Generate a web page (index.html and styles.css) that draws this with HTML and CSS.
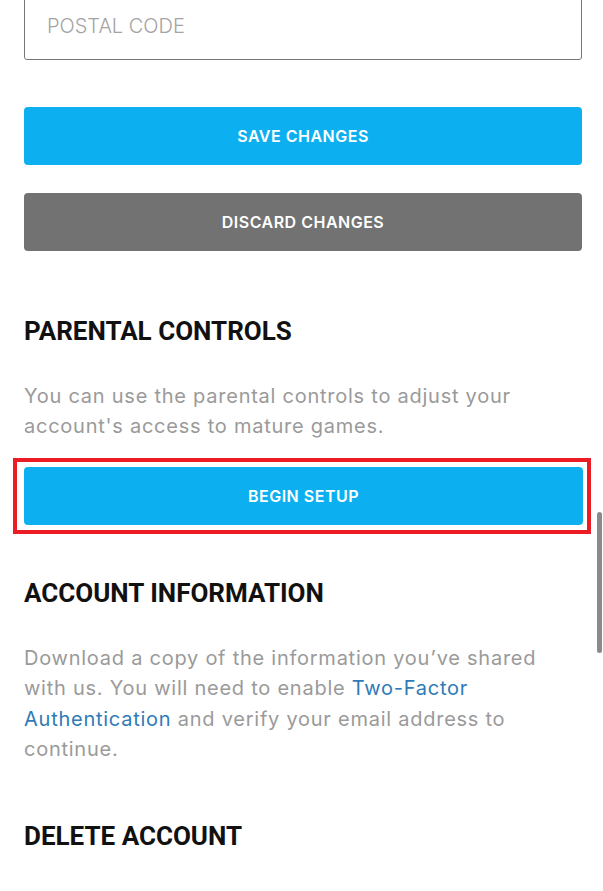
FILE: index.html
```html
<!DOCTYPE html>
<html lang="en">
<head>
<meta charset="utf-8">
<title>Account Settings</title>
<link rel="stylesheet" href="styles.css">
</head>
<body>
<main class="page">
  <div class="field">
    <input class="field-input" type="text" placeholder="POSTAL CODE">
  </div>
  <div class="actions">
    <button class="btn btn-primary" type="button">SAVE CHANGES</button>
    <button class="btn btn-secondary" type="button">DISCARD CHANGES</button>
  </div>

  <section class="section section-first">
    <h2 class="section-title">PARENTAL CONTROLS</h2>
    <p class="section-text">You can use the parental controls to adjust your account's access to mature games.</p>
    <div class="highlight">
      <button class="btn btn-primary" type="button">BEGIN SETUP</button>
    </div>
  </section>

  <section class="section section-account">
    <h2 class="section-title">ACCOUNT INFORMATION</h2>
    <p class="section-text">Download a copy of the information you’ve shared with us. You will need to enable <a class="link" href="#">Two-Factor Authentication</a> and verify your email address to continue.</p>
  </section>

  <section class="section section-delete">
    <h2 class="section-title">DELETE ACCOUNT</h2>
    <p class="section-text section-text-tight">Request to permanently delete your account.</p>
  </section>
</main>
<div class="scrollbar"></div>
</body>
</html>
```
FILE: styles.css
```css
* { box-sizing: border-box; }

html, body {
  margin: 0;
  padding: 0;
  background: #ffffff;
  height: 100%;
  overflow: hidden;
}

body {
  font-family: "Inter", "Noto Sans", sans-serif;
  color: #111;
}

.page {
  padding: 0 21px 0 24px;
  margin-top: -8px;
}

.field-input {
  display: block;
  width: 100%;
  height: 68px;
  border: 1.5px solid #777;
  border-radius: 3px;
  background: #fff;
  padding: 0 22px;
  font-family: "Inter", sans-serif;
  font-weight: 300;
  font-size: 20px;
  color: #333;
  outline: none;
}

.field-input::placeholder {
  color: #a3a3a3;
}

.actions {
  margin-top: 47px;
  display: flex;
  flex-direction: column;
  gap: 28px;
}

.btn {
  display: block;
  width: 100%;
  height: 58px;
  border: 0;
  border-radius: 4px;
  font-family: "Inter", sans-serif;
  font-weight: 600;
  font-size: 16px;
  letter-spacing: 0.5px;
  color: #fff;
  cursor: pointer;
}

.btn-primary { background: #0cb0f0; }
.btn-secondary { background: #727272; }

.section-title {
  margin: 0;
  font-family: "Roboto", "Inter", sans-serif;
  font-weight: 700;
  font-size: 26px;
  line-height: 28px;
  color: #111;
}

.section-first { margin-top: 66px; }
.section-account { margin-top: 45px; }
.section-delete { margin-top: 57px; }

.section-text {
  max-width: 550px;
  margin: 35.5px 0 0;
  font-size: 20px;
  line-height: 30.5px;
  letter-spacing: 0.75px;
  color: #9a9a9a;
}

.section-text-tight { margin-top: 34px; }

.link {
  color: #2f7bb7;
  text-decoration: none;
}

.highlight {
  margin: 16.5px -9px 0 -11px;
  border: 4px solid #ec1c24;
  padding: 5px 4px 5px 7px;
}

.scrollbar {
  position: absolute;
  top: 512px;
  right: 1px;
  width: 5px;
  height: 141px;
  border-radius: 3px;
  background: #8a8a8a;
}
```
